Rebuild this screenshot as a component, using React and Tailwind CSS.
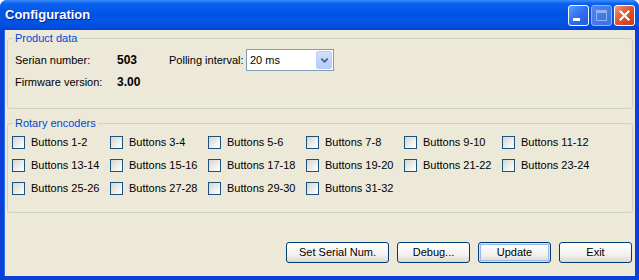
import { ChevronDown } from 'lucide-react';

const encoders = [
  'Buttons 1-2', 'Buttons 3-4', 'Buttons 5-6', 'Buttons 7-8', 'Buttons 9-10', 'Buttons 11-12',
  'Buttons 13-14', 'Buttons 15-16', 'Buttons 17-18', 'Buttons 19-20', 'Buttons 21-22', 'Buttons 23-24',
  'Buttons 25-26', 'Buttons 27-28', 'Buttons 29-30', 'Buttons 31-32',
];

function Checkbox({ label }) {
  return (
    <label className="flex items-center h-[13px] gap-[6px] whitespace-nowrap">
      <span className="w-[13px] h-[13px] shrink-0 border border-[#1c5180] bg-[linear-gradient(135deg,#d6d4cc_0%,#f4f4f0_70%,#ffffff_100%)]" />
      {label}
    </label>
  );
}

function Button({ label, width, isDefault }) {
  return (
    <button
      className={
        'h-[21px] rounded-[3px] border border-[#003c74] bg-[linear-gradient(#ffffff,#f3f2ee_60%,#dcd8cd)] text-[11px] text-black ' +
        width +
        (isDefault ? ' shadow-[inset_0_0_0_1px_#cee7ff,inset_0_0_0_2px_#98b8ea]' : '')
      }
    >
      {label}
    </button>
  );
}

function TitleButton({ kind }) {
  if (kind === 'close') {
    return (
      <div className="w-[21px] h-[21px] rounded-[3px] border border-white bg-[linear-gradient(135deg,#f09a7d,#e0572f_45%,#c63a15)] flex items-center justify-center">
        <svg width="11" height="11" viewBox="0 0 11 11">
          <path d="M1.5 1.5 L9.5 9.5 M9.5 1.5 L1.5 9.5" stroke="white" strokeWidth="2.2" strokeLinecap="square" />
        </svg>
      </div>
    );
  }
  if (kind === 'max') {
    return (
      <div className="w-[21px] h-[21px] rounded-[3px] border border-[#8fb2f5] bg-[linear-gradient(135deg,#4f86ec,#3a6fe0)] flex items-center justify-center">
        <div className="w-[11px] h-[11px] border border-[#8fb2f5] border-t-[3px]" />
      </div>
    );
  }
  return (
    <div className="w-[21px] h-[21px] rounded-[3px] border border-white bg-[linear-gradient(135deg,#5c9bff,#2f6ff0_50%,#2258e0)] flex items-end pl-[4px] pb-[4px]">
      <div className="w-[7px] h-[3px] bg-white" />
    </div>
  );
}

export default function App() {
  return (
    <div
      className="w-[639px] h-[280px] flex flex-col rounded-t-[7px] bg-[#0a3fd8] text-[11px] text-black overflow-hidden"
      style={{ fontFamily: '"Liberation Sans", Arial, sans-serif' }}
    >
      {/* Title bar */}
      <div className="h-[30px] shrink-0 flex items-center pl-[5px] pr-[4px] bg-[linear-gradient(#3c8efc_0%,#0a61ee_12%,#0055e6_45%,#0052e3_80%,#0044d2_100%)]">
        <span className="flex-1 text-white font-bold text-[13px] [text-shadow:1px_1px_0_#0a1e8c]">Configuration</span>
        <div className="flex gap-[2px] mt-[1px]">
          <TitleButton kind="min" />
          <TitleButton kind="max" />
          <TitleButton kind="close" />
        </div>
      </div>

      {/* Client area */}
      <div className="flex-1 flex flex-col mx-[4px] mb-[4px] bg-[#ece9d8] border-l border-[#2c6af0] px-[2px] pt-[1px]">
        {/* Product data */}
        <fieldset className="h-[78px] border border-[#d0d0bf] rounded-[3px] px-[7px]">
          <legend className="ml-[-2px] px-[2px] text-[#0046d5] leading-[15px]">Product data</legend>
          <div className="flex items-center h-[22px] mt-[3px]">
            <span className="w-[102px]">Serian number:</span>
            <span className="w-[52px] font-bold text-[12px]">503</span>
            <span className="w-[77px]">Polling interval:</span>
            <div className="w-[88px] h-[22px] border border-[#7f9db9] bg-white flex items-center pl-[3px] pr-[1px]">
              <span className="flex-1">20 ms</span>
              <div className="w-[16px] h-[18px] rounded-[2px] border border-[#b9cdf5] bg-[linear-gradient(#d3e0fd,#b6cbf8)] flex items-center justify-center">
                <ChevronDown className="w-[11px] h-[11px] text-[#4d6185]" strokeWidth={4} />
              </div>
            </div>
          </div>
          <div className="flex items-center h-[14px] mt-[4px]">
            <span className="w-[102px]">Firmware version:</span>
            <span className="font-bold text-[12px]">3.00</span>
          </div>
        </fieldset>

        {/* Rotary encoders */}
        <fieldset className="h-[97px] mt-[7px] border border-[#d0d0bf] rounded-[3px] px-[4px]">
          <legend className="ml-[1px] px-[2px] text-[#0046d5] leading-[15px]">Rotary encoders</legend>
          <div className="grid grid-cols-[repeat(6,98px)] gap-y-[10px] mt-[5px]">
            {encoders.map((e) => (
              <Checkbox key={e} label={e} />
            ))}
          </div>
        </fieldset>

        {/* Buttons */}
        <div className="mt-auto mb-[13px] flex justify-end gap-[8px] pr-[1px]">
          <Button label="Set Serial Num." width="w-[103px]" />
          <Button label="Debug..." width="w-[73px]" />
          <Button label="Update" width="w-[73px]" isDefault />
          <Button label="Exit" width="w-[73px]" />
        </div>
      </div>
    </div>
  );
}
